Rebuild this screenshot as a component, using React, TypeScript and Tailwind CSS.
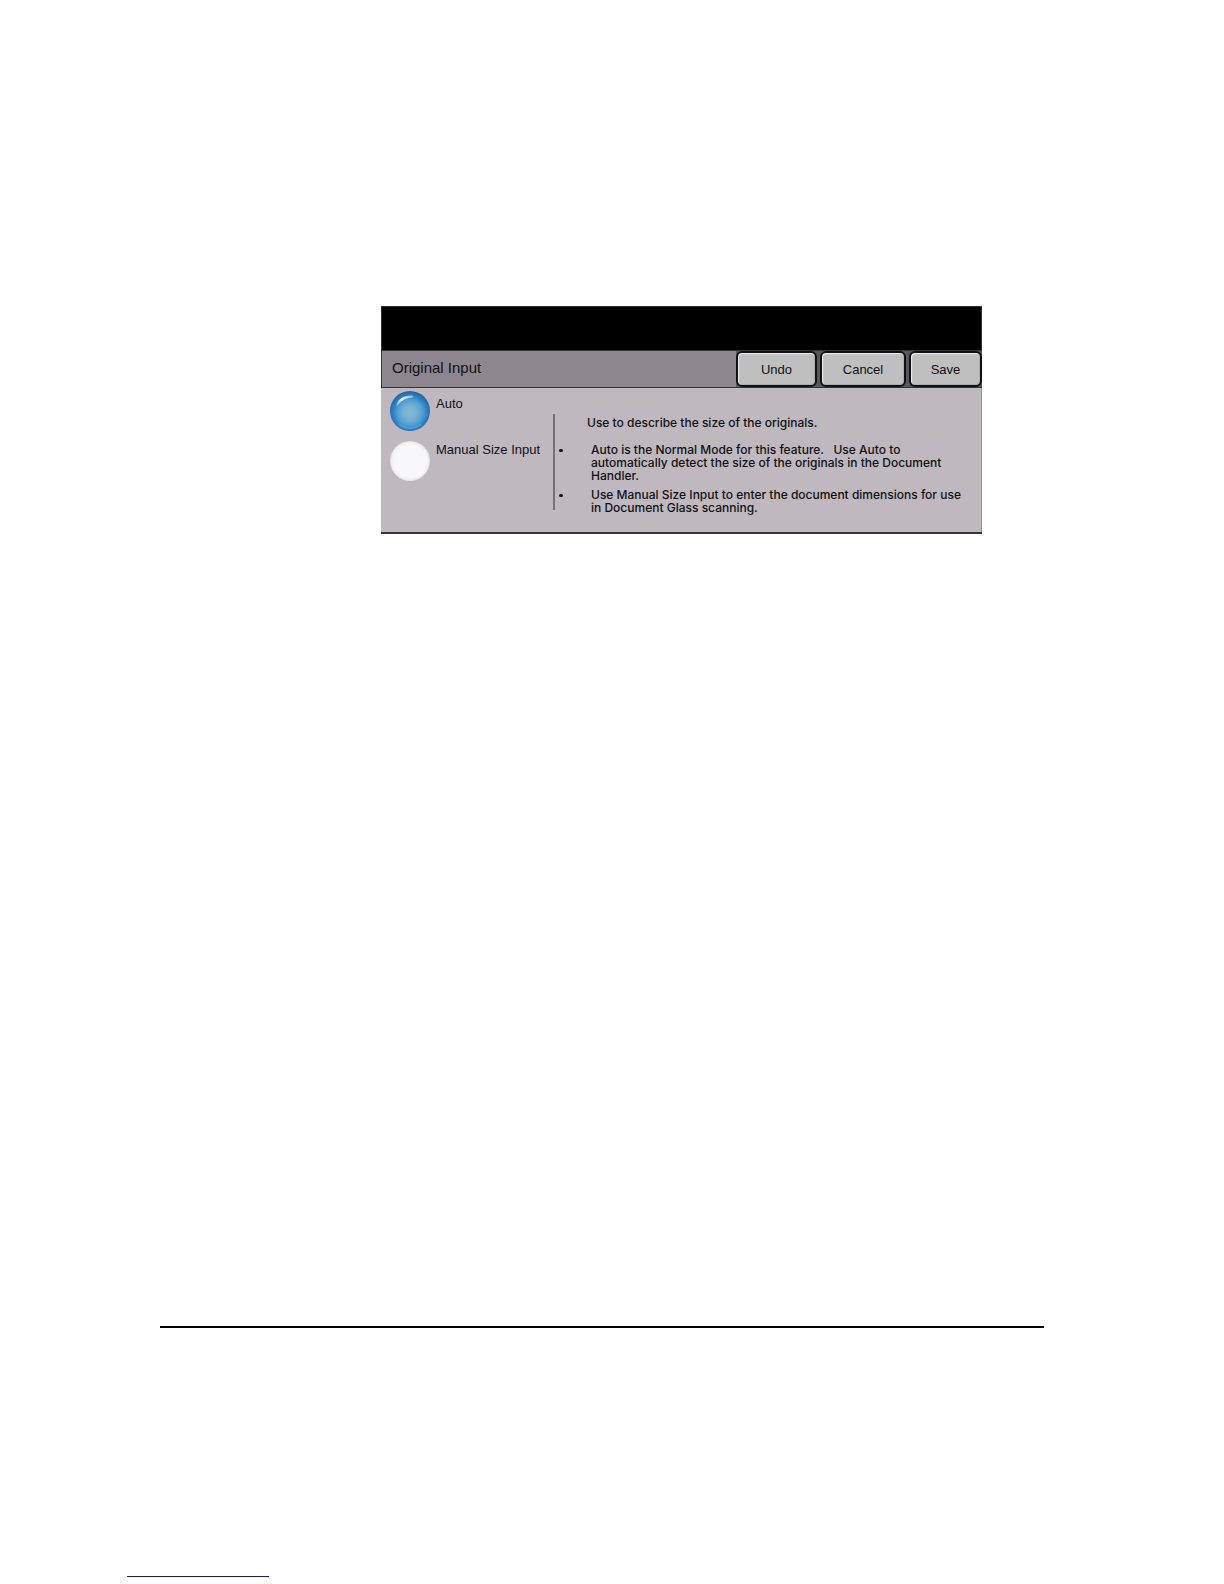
import { useState } from "react"
import clsx from "clsx"

type InputMode = "auto" | "manual"

const actions = [
  { label: "Undo", className: "w-[81px]" },
  { label: "Cancel", className: "w-[86px]" },
  { label: "Save", className: "w-[73px]" },
]

function ActionButton(props: { label: string; className: string }) {
  return (
    <button
      type="button"
      className={clsx(
        "rounded-md border-2 border-[#111014] bg-[#bfbfbf] pt-px text-[13px] leading-4 shadow-[inset_1px_1px_1px_#f0f0f0,inset_-1px_-1px_0_#adadad]",
        props.className
      )}
    >
      {props.label}
    </button>
  )
}

function ModeOption(props: {
  label: string
  value: InputMode
  selected: InputMode
  onSelect: (value: InputMode) => void
  className?: string
}) {
  const checked = props.selected === props.value
  return (
    <label className="flex items-start gap-1.5">
      <span className="relative flex shrink-0">
        <input
          type="radio"
          name="input-mode"
          value={props.value}
          checked={checked}
          onChange={() => props.onSelect(props.value)}
          className="size-10 appearance-none rounded-full bg-[radial-gradient(circle,#f8f7fc_0%,#f8f7fc_56%,#f0eef5_66%,#ddd9e2_71%)] checked:bg-[radial-gradient(circle_at_50%_54%,#86b9d3_0%,#78b2d4_22%,#52a0d6_42%,#2f84c8_56%,#2a66a4_70%)]"
        />
        {checked && (
          <svg viewBox="0 0 40 40" className="pointer-events-none absolute inset-0 size-10" aria-hidden="true">
            <defs>
              <linearGradient id="shine" x1="0" y1="1" x2="1" y2="0">
                <stop offset="0" stopColor="#fff" stopOpacity="0.2" />
                <stop offset="0.5" stopColor="#fff" stopOpacity="0.9" />
                <stop offset="1" stopColor="#fff" stopOpacity="0.4" />
              </linearGradient>
            </defs>
            <path d="M6 16C7 9 12 4.500 22 4.500C24 5 24 6 22 6.500C14 7.500 11 10 6 16Z" fill="url(#shine)" />
            <path d="M9 33A16.500 16.500 0 0 0 31 33" fill="none" stroke="#5fb2e6" strokeWidth="1.500" opacity="0.6" />
          </svg>
        )}
      </span>
      <span className={clsx("text-[13px] leading-[18px] whitespace-nowrap", props.className)}>{props.label}</span>
    </label>
  )
}

function HelpText() {
  return (
    <div className="mt-[26px] flex h-24 min-w-0 flex-1 border-l-2 border-[#777078] font-['Inter',sans-serif] text-xs leading-[13px] font-medium">
      <div className="flex-1">
        <p className="mt-0.5 pl-8">Use to describe the size of the originals.</p>
        <ul className="mt-3.5 flex flex-col gap-1.5">
          <li className="flex gap-7">
            <span className="mt-1.5 ml-1 h-[3px] w-1 shrink-0 rounded-full bg-[#18141c]" />
            <span className="pr-2 whitespace-pre-wrap">
              Auto is the Normal Mode for this feature.{"   "}Use Auto to
              <br />
              automatically detect the size of the originals in the Document
              <br />
              Handler.
            </span>
          </li>
          <li className="flex gap-7">
            <span className="mt-1.5 ml-1 h-[3px] w-1 shrink-0 rounded-full bg-[#18141c]" />
            <span>
              Use Manual Size Input to enter the document dimensions for use
              <br />
              in Document Glass scanning.
            </span>
          </li>
        </ul>
      </div>
    </div>
  )
}

export default function App() {
  const [mode, setMode] = useState<InputMode>("auto")

  return (
    <div className="flex min-h-screen flex-col bg-white font-['Liberation_Sans',sans-serif] text-[#111014]">
      <main className="pt-[306px] pr-[242px] pl-[381px]">
        <section className="border-b-2 border-[#39343c] bg-[#bfb8bf]">
          {/* Message bar */}
          <div className="h-[45px] border border-[#333] bg-black" />
          <header className="flex h-[37px] items-stretch justify-between border-b border-l border-[#39343c] bg-[#8e868e]">
            <h1 className="pl-2.5 text-[15px] leading-[34px]">Original Input</h1>
            <div className="flex gap-[3px] bg-[#5c565e]">
              {actions.map((action) => (
                <ActionButton key={action.label} {...action} />
              ))}
            </div>
          </header>
          <div className="flex h-[144px] border-r border-[#989199]">
            <fieldset className="flex w-[172px] shrink-0 flex-col gap-2.5 pt-[3px] pl-[9px]">
              <ModeOption label="Auto" value="auto" selected={mode} onSelect={setMode} className="mt-1" />
              <ModeOption label="Manual Size Input" value="manual" selected={mode} onSelect={setMode} />
            </fieldset>
            <HelpText />
          </div>
        </section>
      </main>
      <footer className="mt-auto pb-[7px]">
        <hr className="mr-[180px] ml-40 border-t-2 border-black" />
        <a href="#" aria-label="Link" className="mt-[248px] ml-[127px] block h-px w-[142px] bg-[#1a1a7c]" />
      </footer>
    </div>
  )
}
